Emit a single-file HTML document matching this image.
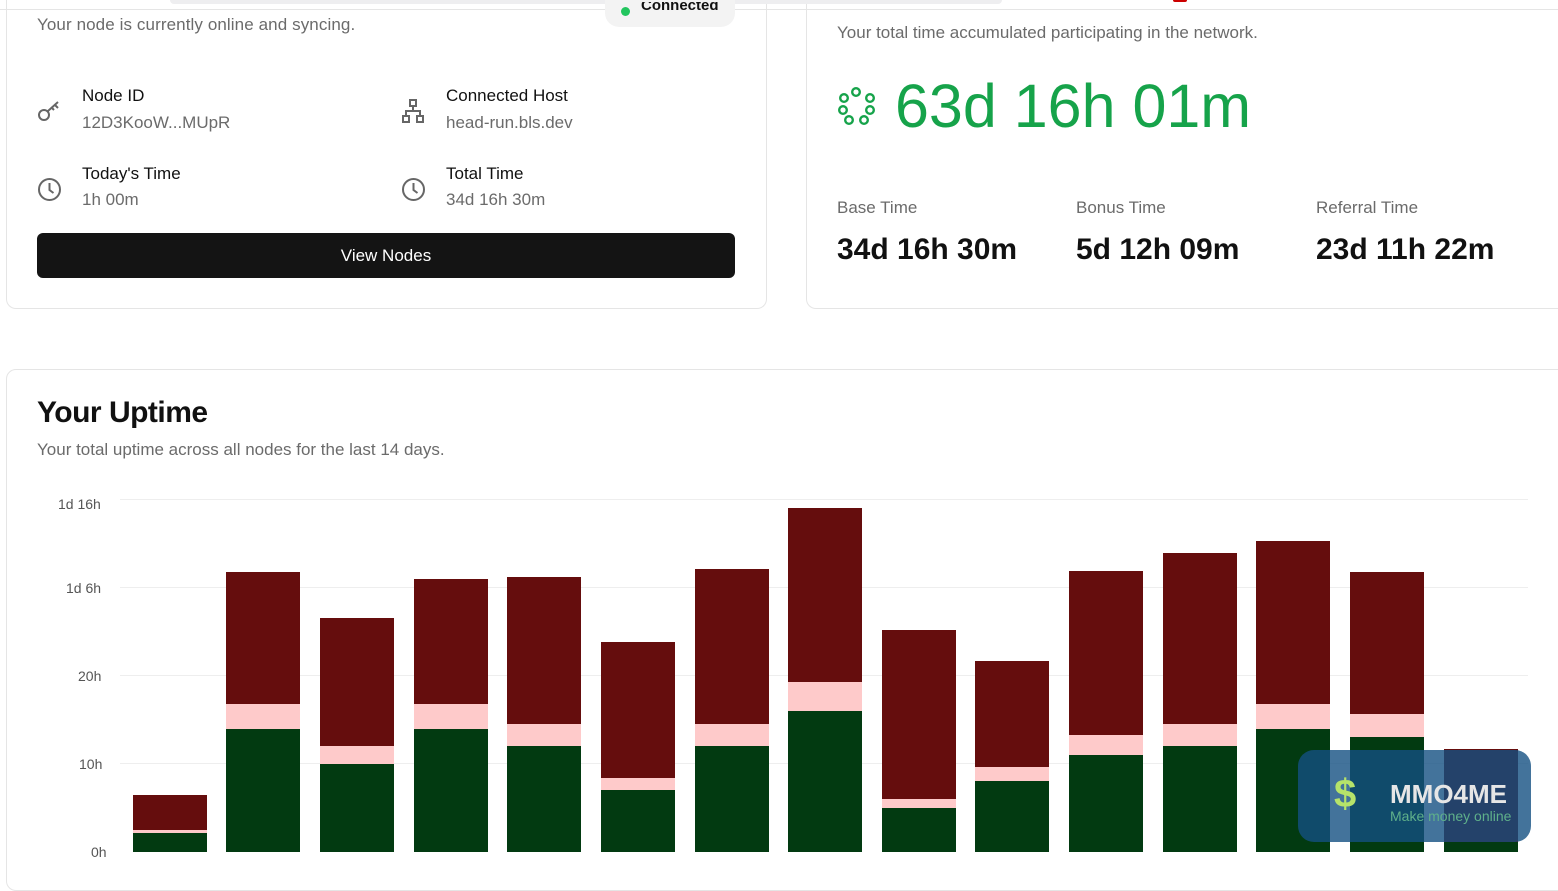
<!DOCTYPE html><html><head><style>
body{margin:0;width:1558px;height:859px;overflow:hidden;background:#fff;font-family:"Liberation Sans",sans-serif;position:relative}
.a{position:absolute}
.card{position:absolute;border:1px solid #e5e5e5;border-radius:10px;background:#fff}
.g{color:#6b6b6b}
.lbl{font-size:17px;color:#111}
.val{font-size:17px;color:#6b6b6b}
.bar{position:absolute;width:74px}
</style></head><body>
<div class="card" style="left:6px;top:-20px;width:759px;height:328px;border-top:none"></div>
<div class="card" style="left:806px;top:-20px;width:780px;height:328px;border-top:none"></div>
<div class="a" style="left:0;top:9px;width:1558px;height:1px;background:#e5e5e5"></div>
<div class="a" style="left:170px;top:0;width:832px;height:4px;background:#eeeef0;border-radius:0 0 8px 8px"></div>
<div class="a" style="left:1173px;top:0;width:14px;height:2px;background:#c00;border-radius:0 0 4px 4px"></div>

<div class="a" style="left:605px;top:0;width:130px;height:27px;background:#f3f3f3;border-radius:0 0 14px 14px;overflow:hidden"></div>
<div class="a" style="left:621px;top:7px;width:9px;height:9px;border-radius:50%;background:#22c55e"></div>
<div class="a" style="left:641px;top:2px;font-size:15px;font-weight:bold;color:#111;line-height:14px;height:14px;overflow:hidden"><span style="position:relative;top:-3px">Connected</span></div>
<div class="a g" style="left:37px;top:15px;font-size:17px;letter-spacing:0.1px">Your node is currently online and syncing.</div>

<svg class="a" style="left:36px;top:98px" width="26" height="26" viewBox="0 0 26 26" fill="none" stroke="#666" stroke-width="2"><circle cx="8" cy="17" r="5"/><path d="M12 13l10-9M19 7l3 3M16 10l2 2"/></svg>
<div class="a lbl" style="left:82px;top:86px">Node ID</div>
<div class="a val" style="left:82px;top:113px">12D3KooW...MUpR</div>
<svg class="a" style="left:400px;top:98px" width="26" height="26" viewBox="0 0 26 26" fill="none" stroke="#666" stroke-width="2"><rect x="10" y="2" width="6" height="6"/><rect x="3" y="18" width="6" height="6"/><rect x="17" y="18" width="6" height="6"/><path d="M13 8v5M6 18v-5h14v5"/></svg>
<div class="a lbl" style="left:446px;top:86px">Connected Host</div>
<div class="a val" style="left:446px;top:113px">head-run.bls.dev</div>
<svg class="a" style="left:37px;top:177px" width="25" height="25" viewBox="0 0 25 25" fill="none" stroke="#666" stroke-width="2"><circle cx="12.5" cy="12.5" r="10.5"/><path d="M12.5 6v7l4 3"/></svg>
<div class="a lbl" style="left:82px;top:164px">Today's Time</div>
<div class="a val" style="left:82px;top:190px">1h 00m</div>
<svg class="a" style="left:401px;top:177px" width="25" height="25" viewBox="0 0 25 25" fill="none" stroke="#666" stroke-width="2"><circle cx="12.5" cy="12.5" r="10.5"/><path d="M12.5 6v7l4 3"/></svg>
<div class="a lbl" style="left:446px;top:164px">Total Time</div>
<div class="a val" style="left:446px;top:190px">34d 16h 30m</div>
<div class="a" style="left:37px;top:233px;width:698px;height:45px;background:#141414;border-radius:6px;color:#fff;font-size:17px;text-align:center;line-height:45px">View Nodes</div>

<div class="a g" style="left:837px;top:23px;font-size:17px">Your total time accumulated participating in the network.</div>
<svg class="a" style="left:837px;top:87px" width="40" height="40" viewBox="0 0 40 40" fill="none" stroke="#16a34a" stroke-width="2.4"><circle cx="19" cy="5" r="3.8"/><circle cx="7" cy="11" r="3.8"/><circle cx="33" cy="11" r="3.8"/><circle cx="6" cy="23" r="3.8"/><circle cx="33" cy="23" r="3.8"/><circle cx="12" cy="33" r="3.8"/><circle cx="27" cy="33" r="3.8"/></svg>
<div class="a" style="left:895px;top:70px;font-size:61px;color:#16a34a;line-height:72px">63d 16h 01m</div>
<div class="a g" style="left:837px;top:198px;font-size:17px">Base Time</div>
<div class="a g" style="left:1076px;top:198px;font-size:17px">Bonus Time</div>
<div class="a g" style="left:1316px;top:198px;font-size:17px">Referral Time</div>
<div class="a" style="left:837px;top:233px;font-size:30px;font-weight:bold;color:#111">34d 16h 30m</div>
<div class="a" style="left:1076px;top:233px;font-size:30px;font-weight:bold;color:#111">5d 12h 09m</div>
<div class="a" style="left:1316px;top:233px;font-size:30px;font-weight:bold;color:#111">23d 11h 22m</div>

<div class="card" style="left:6px;top:369px;width:1580px;height:520px"></div>
<div class="a" style="left:37px;top:396px;font-size:30px;font-weight:bold;color:#111;letter-spacing:-0.5px">Your Uptime</div>
<div class="a g" style="left:37px;top:440px;font-size:17px">Your total uptime across all nodes for the last 14 days.</div>
<div class="a" style="left:120px;top:499px;width:1408px;height:1px;background:#eee"></div>
<div class="a" style="left:120px;top:587px;width:1408px;height:1px;background:#eee"></div>
<div class="a" style="left:120px;top:675px;width:1408px;height:1px;background:#eee"></div>
<div class="a" style="left:120px;top:763px;width:1408px;height:1px;background:#eee"></div>
<div class="a g" style="left:58px;top:496px;font-size:14px;color:#555">1d 16h</div>
<div class="a g" style="left:66px;top:580px;font-size:14px;color:#555">1d 6h</div>
<div class="a g" style="left:78px;top:668px;font-size:14px;color:#555">20h</div>
<div class="a g" style="left:79px;top:756px;font-size:14px;color:#555">10h</div>
<div class="a g" style="left:91px;top:844px;font-size:14px;color:#555">0h</div>
<div id="bars"></div>
<script>
var d=[[133,833,830,795],[226,729,704,572],[320,764,746,618],[414,729,704,579],[507,746,724,577],[601,790,778,642],[695,746,724,569],[788,711,682,508],[882,808,799,630],[975,781,767,661],[1069,755,735,571],[1163,746,724,553],[1256,729,704,541],[1350,737,714,572],[1444,842,842,749]];
var h='';d.forEach(function(b){
h+='<div class="bar" style="left:'+b[0]+'px;top:'+b[3]+'px;height:'+(b[2]-b[3])+'px;background:#650d0d"></div>';
h+='<div class="bar" style="left:'+b[0]+'px;top:'+b[2]+'px;height:'+(b[1]-b[2])+'px;background:#fecaca"></div>';
h+='<div class="bar" style="left:'+b[0]+'px;top:'+b[1]+'px;height:'+(852-b[1])+'px;background:#023a11"></div>';});
document.getElementById('bars').innerHTML=h;
</script>
<div class="a" style="left:1298px;top:750px;width:233px;height:92px;background:rgba(20,80,130,0.8);border-radius:16px"></div>
<div class="a" style="left:1334px;top:772px;font-size:40px;font-weight:bold;color:#b6e36a">$</div>
<div class="a" style="left:1390px;top:779px;font-size:26px;font-weight:bold;color:#e6e6e6">MMO4ME</div>
<div class="a" style="left:1390px;top:808px;font-size:14px;color:#5fb08a">Make money online</div>
</body></html>
